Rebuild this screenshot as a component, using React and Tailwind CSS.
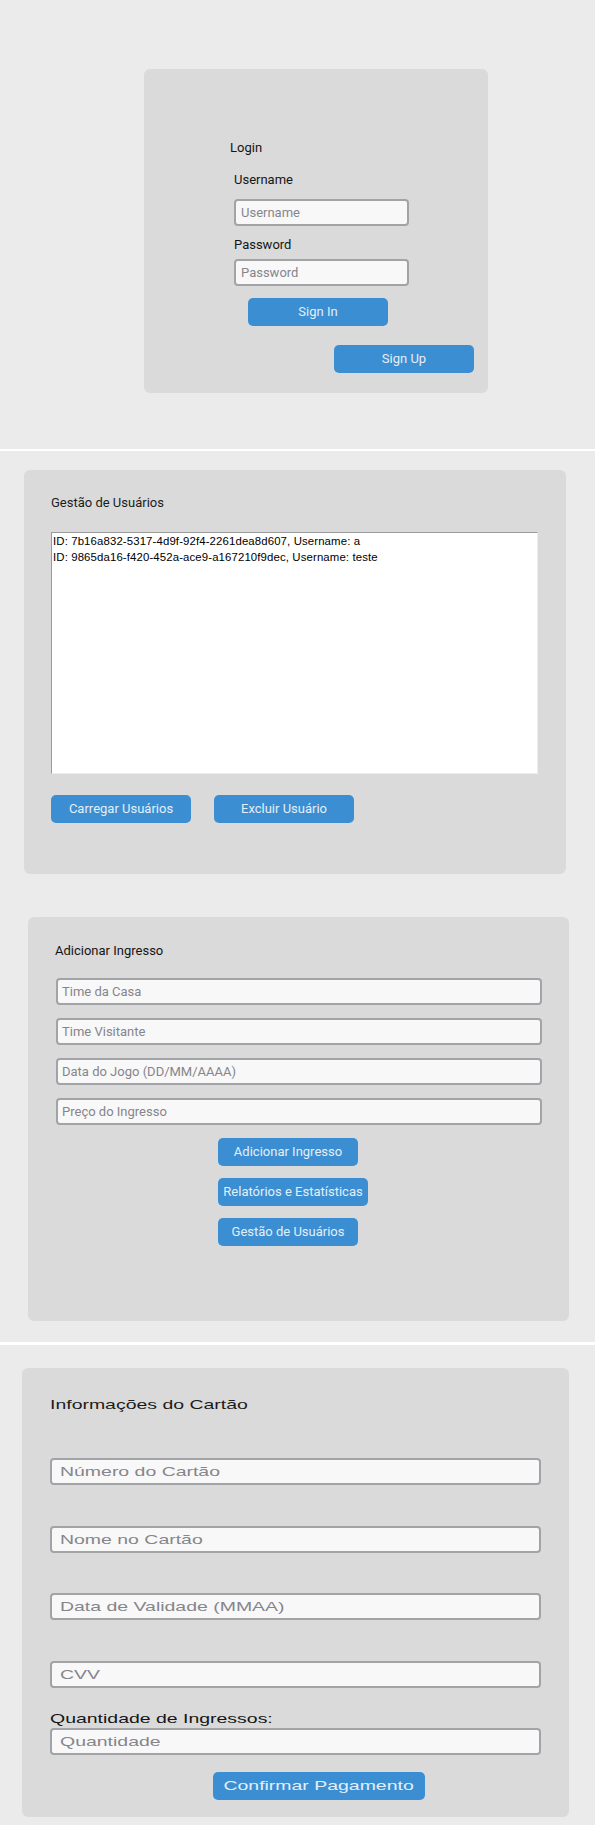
import React from "react";

const roboto = { fontFamily: "Roboto, 'Liberation Sans', sans-serif" };

function Field({ placeholder, className = "", font = "" }) {
  return (
    <div
      className={`h-[27px] rounded-[4px] border-2 border-[#a2a3a7] bg-[#f8f8f8] flex items-center ${className}`}
    >
      <span className={`text-[#85858c] whitespace-nowrap ${font}`}>{placeholder}</span>
    </div>
  );
}

function Btn({ children, className = "", font = "" }) {
  return (
    <div
      className={`h-[28px] rounded-[5px] bg-[#3b8ed2] text-[#e4eef8] flex items-center justify-center whitespace-nowrap ${className} ${font}`}
    >
      {children}
    </div>
  );
}

function Wide({ children, center = false }) {
  return (
    <span
      className={`inline-block whitespace-nowrap scale-x-[1.52] ${center ? "origin-center" : "origin-left"}`}
    >
      {children}
    </span>
  );
}

export default function App() {
  return (
    <div className="w-[595px] bg-[#ebebeb]" style={roboto}>
      {/* Section 1: Login */}
      <div className="h-[449px] pt-[69px] pl-[144px]">
        <div className="w-[344px] h-[324px] rounded-[6px] bg-[#dadada] flex flex-col pt-[71px] pb-[19px]">
          <div className="ml-[86px] text-[13px] leading-[16px] text-[#151515]">Login</div>
          <div className="ml-[90px] mt-[16px] text-[13px] leading-[16px] text-[#151515]">Username</div>
          <Field placeholder="Username" className="ml-[90px] mt-[11px] w-[175px] pl-[5px]" font="text-[13px]" />
          <div className="ml-[90px] mt-[11px] text-[13px] leading-[16px] text-[#151515]">Password</div>
          <Field placeholder="Password" className="ml-[90px] mt-[6px] w-[175px] pl-[5px]" font="text-[13px]" />
          <Btn className="ml-[104px] mt-[12px] w-[140px] text-[13px]">Sign In</Btn>
          <Btn className="ml-[190px] mt-[19px] w-[140px] text-[13px]">Sign Up</Btn>
        </div>
      </div>
      <div className="h-[2px] bg-white" />

      {/* Section 2: Gestão de Usuários */}
      <div className="h-[442px] pt-[19px] pl-[24px]">
        <div className="w-[542px] h-[404px] rounded-[6px] bg-[#dadada] flex flex-col pt-[25px] pl-[27px]">
          <div className="text-[13px] leading-[16px] text-[#1c1c1c]">Gestão de Usuários</div>
          <div className="mt-[21px] w-[487px] h-[242px] bg-white border-t border-l border-t-[#9a9a9a] border-l-[#9a9a9a] border-r border-b border-r-[#ececec] border-b-[#ececec] pl-[1px]">
            <div
              className="text-[11.4px] tracking-[0.12px] leading-[16px] text-black whitespace-nowrap"
              style={{ fontFamily: "'Liberation Sans', Arial, sans-serif" }}
            >
              <div>ID: 7b16a832-5317-4d9f-92f4-2261dea8d607, Username: a</div>
              <div>ID: 9865da16-f420-452a-ace9-a167210f9dec, Username: teste</div>
            </div>
          </div>
          <div className="mt-[21px] flex gap-[23px]">
            <Btn className="w-[140px] text-[13px]">Carregar Usuários</Btn>
            <Btn className="w-[140px] text-[13px]">Excluir Usuário</Btn>
          </div>
        </div>
      </div>

      {/* Section 3: Adicionar Ingresso */}
      <div className="h-[449px] pt-[24px] pl-[28px]">
        <div className="w-[541px] h-[404px] rounded-[6px] bg-[#dadada] flex flex-col pt-[26px] pl-[28px]">
          <div className="-ml-[1px] text-[13px] leading-[16px] text-[#151515]">Adicionar Ingresso</div>
          <div className="mt-[19px] flex flex-col gap-[13px]">
            <Field placeholder="Time da Casa" className="w-[486px] pl-[4px]" font="text-[13px]" />
            <Field placeholder="Time Visitante" className="w-[486px] pl-[4px]" font="text-[13px]" />
            <Field placeholder="Data do Jogo (DD/MM/AAAA)" className="w-[486px] pl-[4px]" font="text-[13px]" />
            <Field placeholder="Preço do Ingresso" className="w-[486px] pl-[4px]" font="text-[13px]" />
          </div>
          <div className="mt-[13px] ml-[162px] flex flex-col items-start gap-[12px]">
            <Btn className="w-[140px] text-[13px]">Adicionar Ingresso</Btn>
            <Btn className="w-[150px] text-[13px]">Relatórios e Estatísticas</Btn>
            <Btn className="w-[140px] text-[13px]">Gestão de Usuários</Btn>
          </div>
        </div>
      </div>
      <div className="h-[3px] bg-white" />

      {/* Section 4: Informações do Cartão */}
      <div
        className="h-[480px] pt-[23px] pl-[22px]"
        style={{ fontFamily: "'Liberation Sans', Arial, sans-serif" }}
      >
        <div className="w-[547px] h-[449px] rounded-[6px] bg-[#dadada] flex flex-col pt-[29px] pl-[28px]">
          <div className="text-[12.8px] leading-[16px] text-[#1c1c1c]">
            <Wide>Informações do Cartão</Wide>
          </div>
          <div className="flex flex-col">
            <Field placeholder={<Wide>Número do Cartão</Wide>} className="mt-[45px] w-[491px] pl-[8px]" font="text-[12.8px]" />
            <Field placeholder={<Wide>Nome no Cartão</Wide>} className="mt-[41px] w-[491px] pl-[8px]" font="text-[12.8px]" />
            <Field placeholder={<Wide>Data de Validade (MMAA)</Wide>} className="mt-[40px] w-[491px] pl-[8px]" font="text-[12.8px]" />
            <Field placeholder={<Wide>CVV</Wide>} className="mt-[41px] w-[491px] pl-[8px]" font="text-[12.8px]" />
          </div>
          <div className="mt-[23px] text-[12.8px] leading-[16px] text-[#151515]">
            <Wide>Quantidade de Ingressos:</Wide>
          </div>
          <Field placeholder={<Wide>Quantidade</Wide>} className="mt-[1px] w-[491px] pl-[8px]" font="text-[12.8px]" />
          <Btn className="ml-[163px] mt-[17px] w-[212px] text-[12.8px]">
            <Wide center>Confirmar Pagamento</Wide>
          </Btn>
        </div>
      </div>
    </div>
  );
}
